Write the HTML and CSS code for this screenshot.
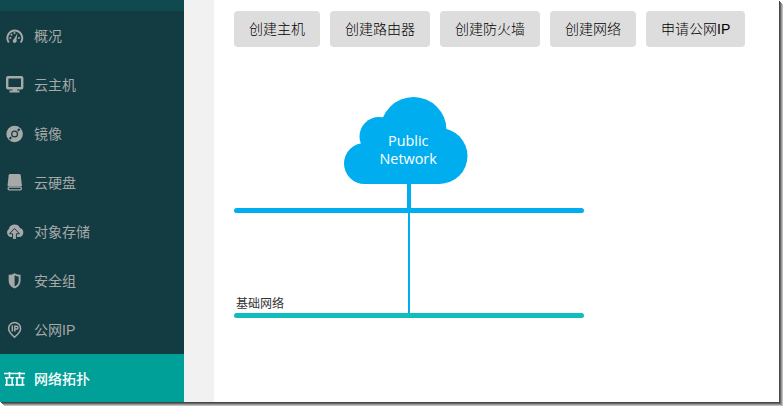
FILE: index.html
```
<!DOCTYPE html>
<html lang="zh-CN">
<head>
<meta charset="utf-8">
<title>网络拓扑</title>
<link rel="stylesheet" href="styles.css">
</head>
<body>
<div class="window">
  <nav class="sidebar">
    <a class="item"><svg class="icon" viewBox="0 0 22 18"><path d="M4.800 15.500A7.500 7.500 0 1 1 16.800 15.500" fill="none" stroke="currentColor" stroke-width="2"/><path d="M13.400 6.200l-.9 6.600a2 2 0 1 1-2.500-.8z" fill="currentColor"/><g fill="currentColor"><circle cx="6.400" cy="11" r="1"/><circle cx="7.500" cy="7.700" r="1"/><circle cx="10.500" cy="5.900" r="1"/><circle cx="14.900" cy="11" r="1"/></g></svg><span>概况</span></a>
    <a class="item"><svg class="icon" viewBox="0 0 22 18"><rect x="3.200" y="1.200" width="15" height="11" rx=".8" fill="none" stroke="currentColor" stroke-width="2.400"/><path d="M8.500 13h4.500v1.500h2.500v2H5.500v-2h3z" fill="currentColor"/></svg><span>云主机</span></a>
    <a class="item"><svg class="icon" viewBox="0 0 22 18"><circle cx="10.600" cy="9" r="8.300" fill="currentColor"/><g class="cut"><circle cx="10.600" cy="9" r="2.900"/><path d="M13.800 5.800l1.800-1.700M7.300 12.200l-1.800 1.700" stroke-width="2"/></g><circle cx="10.600" cy="9" r="1.400" fill="currentColor"/></svg><span>镜像</span></a>
    <a class="item"><svg class="icon" viewBox="0 0 22 18"><path d="M6.200 0h9q1.300 0 1.500 1.200L18 12H3.500L4.700 1.200Q4.900 0 6.200 0z" fill="currentColor"/><rect x="4.200" y="13" width="13.100" height="2.800" rx="1" fill="none" stroke="currentColor" stroke-width="1.300"/></svg><span>云硬盘</span></a>
    <a class="item"><svg class="icon" viewBox="0 0 22 18"><path d="M6.500 14A4.500 4.500 0 0 1 4.800 6 6 6 0 0 1 16 5a4.600 4.600 0 0 1-1 9z" fill="currentColor"/><path d="M10.500 5.500l5 5.300h-3.100v5.700H8.600v-5.700H5.500z" class="arrow" fill="currentColor"/></svg><span>对象存储</span></a>
    <a class="item"><svg class="icon" viewBox="0 0 22 18"><path d="M10.600 2.200q2.400 1.400 5 1.500v5q0 4.500-5 6.800-5-2.300-5-6.800v-5q2.600-.1 5-1.500z" fill="none" stroke="currentColor" stroke-width="1.900"/><path d="M10.600 2v13.500q-5-2.300-5-6.800v-5q2.600-.1 5-1.700z" fill="currentColor"/></svg><span>安全组</span></a>
    <a class="item"><svg class="icon" viewBox="0 0 22 18"><path d="M10.500 16.200Q4.600 11 4.600 7.400a6 6 0 0 1 12 0q0 3.600-6.100 8.800z" fill="none" stroke="currentColor" stroke-width="1.500"/><path d="M8.300 4.500v6M10.800 10.500V5.200h1.700a1.400 1.400 0 0 1 0 2.900h-1.700" fill="none" stroke="currentColor" stroke-width="1.500"/></svg><span>公网IP</span></a>
    <a class="item active"><svg class="icon" viewBox="0 0 22 18"><path d="M0 3.500h21M5.500 2v5M15.500 2v5M1 7.700h9M11.500 7.700h9M1 15h9M11.500 15h9M2.700 8v6.500M8.200 8v6.500M13 8v6.500M18.500 8v6.500" fill="none" stroke="currentColor" stroke-width="1.600"/></svg><span>网络拓扑</span></a>
  </nav>
  <main class="content">
    <div class="toolbar">
      <button>创建主机</button>
      <button>创建路由器</button>
      <button>创建防火墙</button>
      <button>创建网络</button>
      <button>申请公网IP</button>
    </div>
    <svg class="topology" width="350" height="222" viewBox="234 97 350 222">
      <g fill="#00aeef">
        <circle cx="413.500" cy="130" r="33"/>
        <circle cx="379" cy="136.500" r="19.500"/>
        <circle cx="364.500" cy="163.500" r="20.500"/>
        <circle cx="439.500" cy="156" r="28"/>
        <path d="M364 184V148L380 130H430L440 140V184z"/>
        <rect x="407" y="183" width="4" height="26"/>
        <rect x="408" y="212" width="2" height="102"/>
        <rect x="234" y="208" width="350" height="5" rx="2.500"/>
      </g>
      <rect x="234" y="313" width="350" height="5" rx="2.500" fill="#10bcbc"/>
      <text class="cloud-label"><tspan x="388" y="146">Public</tspan><tspan x="379.500" y="164">Network</tspan></text>
      <text class="net-label" x="236" y="308">基础网络</text>
    </svg>
  </main>
</div>
</body>
</html>
```

FILE: styles.css
```
* { box-sizing: border-box; }
body {
  margin: 0;
  height: 406px;
  overflow: hidden;
  background: #fff;
  font: 14px/20px "Liberation Sans", "Noto Sans CJK SC", sans-serif;
}
.window {
  display: flex;
  width: 779px;
  height: 402px;
  background: #fff;
  box-shadow: 1px 1px #464646, 2px 2px #686868, 3px 3px #969696, 4px 4px #c0c0c0;
}
.sidebar {
  width: 184px;
  height: 402px;
  overflow: hidden;
  background: #123c42;
  border-top: 11px solid #0f4a50;
}
.item {
  display: flex;
  align-items: center;
  gap: 8px;
  height: 49px;
  padding-left: 4px;
  color: #a7a8a8;
}
.item.active { background: #009f98; color: #fff; font-weight: 500; }
.icon { width: 22px; height: 18px; }
.cut { fill: none; stroke: #123c42; stroke-width: 1.2; }
.arrow { stroke: #123c42; stroke-width: 1; }
.content {
  flex: 1;
  padding: 11px 0 0 20px;
  border-left: 30px solid #f1f1f1;
}
.toolbar { display: flex; gap: 10px; margin-bottom: 50px; }
button {
  height: 36px;
  padding: 0 15px;
  border: 0;
  border-radius: 4px;
  background: #ddd;
  color: #000;
  font: inherit;
  font-weight: 300;
  white-space: nowrap;
}
.topology { display: block; }
.cloud-label { font: 14.4px "Open Sans", sans-serif; fill: #fff; }
.net-label { font: 12px "Noto Sans CJK SC", sans-serif; fill: #333; }
```
